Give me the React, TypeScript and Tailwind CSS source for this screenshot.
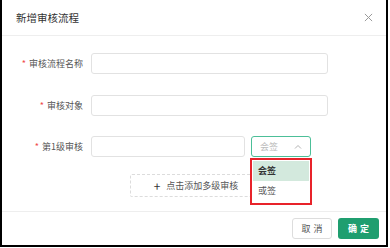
import React from 'react';

const font = { fontFamily: '"Noto Sans CJK SC", "Noto Sans", sans-serif' };

const Label = ({ text }: { text: string }) => (
  <div className="w-[89px] shrink-0 whitespace-nowrap text-right text-[9px] text-[#555] pr-[8px] leading-none">
    <span className="text-[#f04a4a] mr-[3px]">*</span>
    {text}
  </div>
);

const App = () => {
  return (
    <div className="w-[390px] h-[248px] bg-white" style={font}>
      <div className="w-[388px] h-[247px] border-l-2 border-r-2 border-b-2 border-black flex flex-col">
        <div className="h-[36px] shrink-0 flex items-center justify-between pl-[14px] pr-[13px] border-b border-[#eeeeee]">
          <span className="text-[10.5px] text-[#333]">新增审核流程</span>
          <svg width="9" height="9" viewBox="0 0 10 10" className="text-[#999]">
            <path d="M1 1L9 9M9 1L1 9" stroke="currentColor" strokeWidth="1.1" />
          </svg>
        </div>

        <div className="flex-1 flex flex-col pt-[17px]">
          <div className="flex items-center h-[21px]">
            <Label text="审核流程名称" />
            <div className="w-[237px] h-[21px] border border-[#e2e2e2] rounded-[3px]" />
          </div>
          <div className="flex items-center h-[21px] mt-[21px]">
            <Label text="审核对象" />
            <div className="w-[237px] h-[21px] border border-[#e2e2e2] rounded-[3px]" />
          </div>
          <div className="flex items-center h-[21px] mt-[20px]">
            <Label text="第1级审核" />
            <div className="w-[154px] h-[21px] border border-[#e2e2e2] rounded-[3px]" />
            <div className="relative ml-[6px]">
              <div className="w-[60px] h-[21px] border border-[#4cbf98] rounded-[3px] flex items-center justify-between pl-[8px] pr-[8px]">
                <span className="text-[9px] text-[#bbb]">会签</span>
                <svg width="8" height="5" viewBox="0 0 8 5" className="text-[#aaa]">
                  <path d="M1 4.5L4 1.5L7 4.5" fill="none" stroke="currentColor" strokeWidth="0.9" />
                </svg>
              </div>
              <div className="absolute left-[-1px] top-[22px] w-[62px] h-[47px] border-2 border-[#e8232a] bg-white z-10 flex flex-col p-[1px]">
                <div className="h-[20px] bg-[#d3e9dd] flex items-center pl-[5px] text-[9px] font-bold text-[#333]">会签</div>
                <div className="h-[20px] flex items-center pl-[5px] text-[9px] text-[#555]">或签</div>
              </div>
            </div>
          </div>
          <div className="flex mt-[17px] pl-[128px]">
            <div className="w-[132px] h-[23px] border border-dashed border-[#dcdcdc] rounded-[2px] flex items-center justify-center gap-[6px]">
              <span className="text-[12px] text-[#333] leading-none">+</span>
              <span className="text-[9px] text-[#555]">点击添加多级审核</span>
            </div>
          </div>
        </div>

        <div className="h-[34px] shrink-0 border-t border-[#eeeeee] flex justify-end items-start pt-[6px] pr-[7px] gap-[6px]">
          <div className="w-[40px] h-[21px] border border-[#dddddd] rounded-[3px] flex items-center justify-center text-[9px] text-[#555] tracking-[3px] pl-[3px]">取消</div>
          <div className="w-[41px] h-[21px] bg-[#1f9e6f] rounded-[3px] flex items-center justify-center text-[9px] text-white font-bold tracking-[3px] pl-[3px]">确定</div>
        </div>
      </div>
    </div>
  );
};

export default App;
